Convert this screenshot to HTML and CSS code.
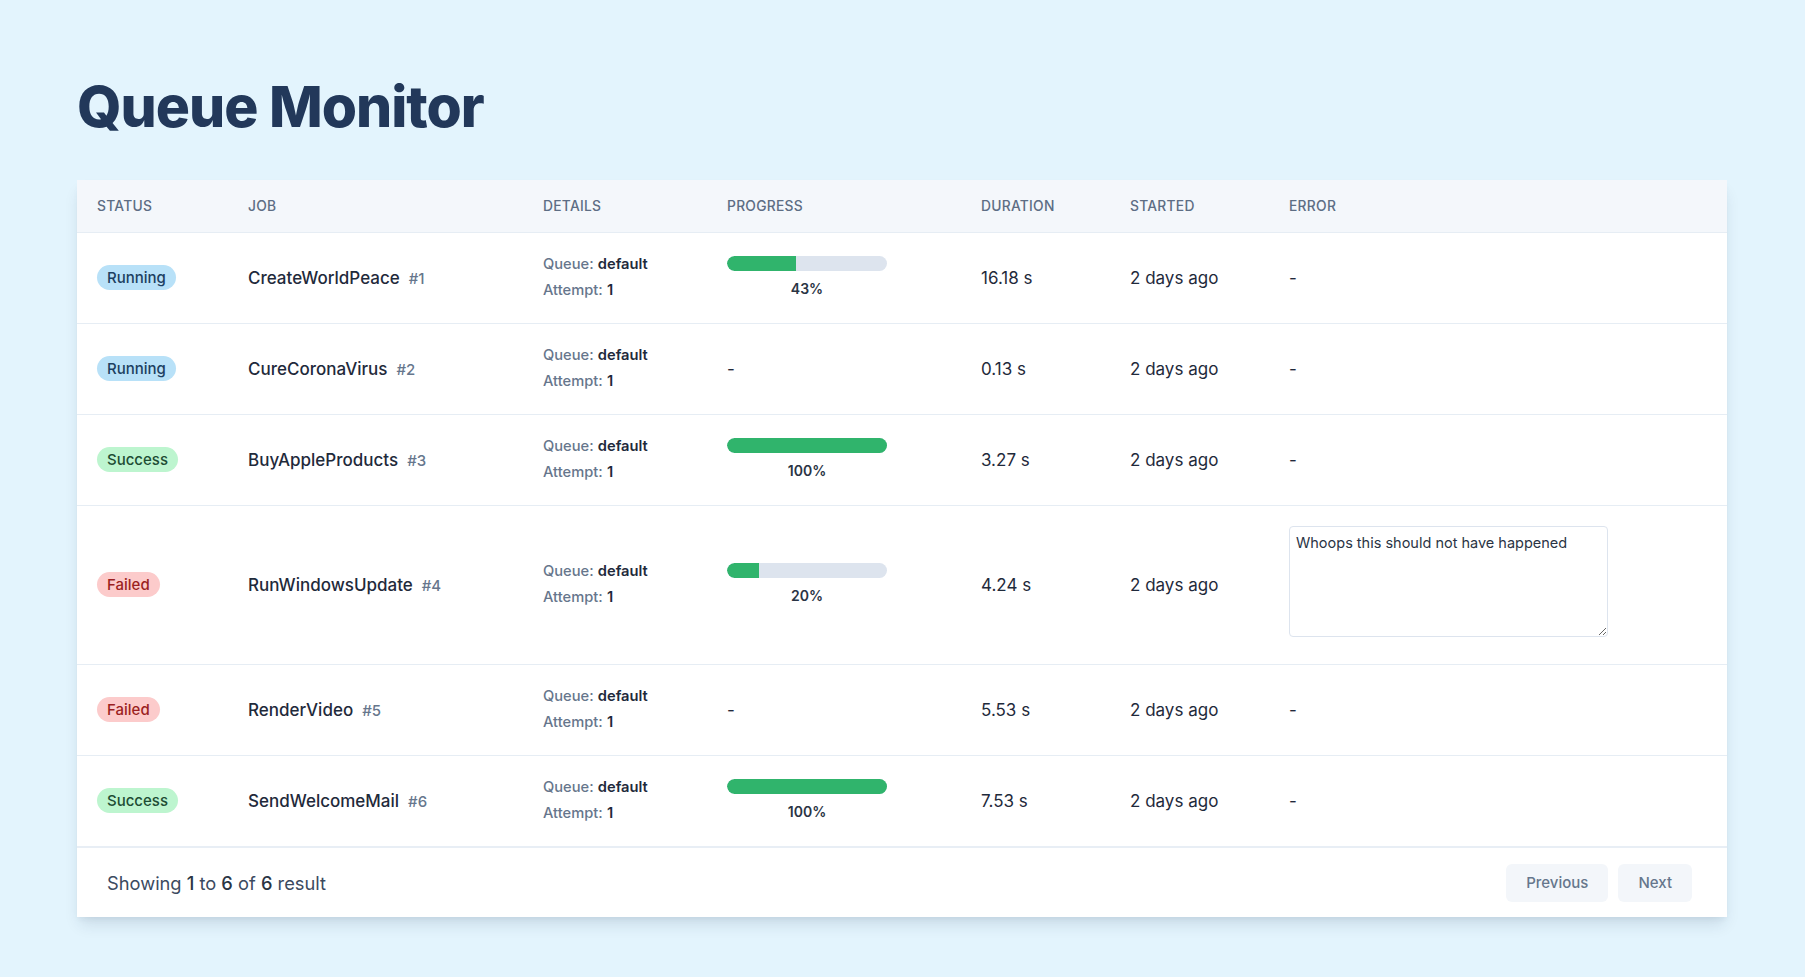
FILE: index.html
```html
<!DOCTYPE html>
<html lang="en">
<head>
<meta charset="utf-8">
<title>Queue Monitor</title>
<link rel="stylesheet" href="styles.css">
</head>
<body>
<div class="page">
  <h1 class="title">Queue Monitor</h1>
  <div class="card">
    <table class="jobs">
      <colgroup>
        <col class="c-status"><col class="c-job"><col class="c-details"><col class="c-progress"><col class="c-duration"><col class="c-started"><col class="c-error">
      </colgroup>
      <thead>
        <tr>
          <th>Status</th><th>Job</th><th>Details</th><th>Progress</th><th>Duration</th><th>Started</th><th>Error</th>
        </tr>
      </thead>
      <tbody>
        <tr>
          <td><span class="badge running">Running</span></td>
          <td><span class="job-name">CreateWorldPeace</span><span class="job-id">#1</span></td>
          <td class="details"><div><span class="lbl">Queue:</span> <b>default</b></div><div><span class="lbl">Attempt:</span> <b>1</b></div></td>
          <td><div class="progress"><div class="bar"><div class="fill" style="width:43%"></div></div><div class="pct">43%</div></div></td>
          <td>16.18 s</td>
          <td>2 days ago</td>
          <td>-</td>
        </tr>
        <tr>
          <td><span class="badge running">Running</span></td>
          <td><span class="job-name">CureCoronaVirus</span><span class="job-id">#2</span></td>
          <td class="details"><div><span class="lbl">Queue:</span> <b>default</b></div><div><span class="lbl">Attempt:</span> <b>1</b></div></td>
          <td>-</td>
          <td>0.13 s</td>
          <td>2 days ago</td>
          <td>-</td>
        </tr>
        <tr>
          <td><span class="badge success">Success</span></td>
          <td><span class="job-name">BuyAppleProducts</span><span class="job-id">#3</span></td>
          <td class="details"><div><span class="lbl">Queue:</span> <b>default</b></div><div><span class="lbl">Attempt:</span> <b>1</b></div></td>
          <td><div class="progress"><div class="bar"><div class="fill" style="width:100%"></div></div><div class="pct">100%</div></div></td>
          <td>3.27 s</td>
          <td>2 days ago</td>
          <td>-</td>
        </tr>
        <tr>
          <td><span class="badge failed">Failed</span></td>
          <td><span class="job-name">RunWindowsUpdate</span><span class="job-id">#4</span></td>
          <td class="details"><div><span class="lbl">Queue:</span> <b>default</b></div><div><span class="lbl">Attempt:</span> <b>1</b></div></td>
          <td><div class="progress"><div class="bar"><div class="fill" style="width:20%"></div></div><div class="pct">20%</div></div></td>
          <td>4.24 s</td>
          <td>2 days ago</td>
          <td><textarea class="error-box" readonly>Whoops this should not have happened</textarea></td>
        </tr>
        <tr>
          <td><span class="badge failed">Failed</span></td>
          <td><span class="job-name">RenderVideo</span><span class="job-id">#5</span></td>
          <td class="details"><div><span class="lbl">Queue:</span> <b>default</b></div><div><span class="lbl">Attempt:</span> <b>1</b></div></td>
          <td>-</td>
          <td>5.53 s</td>
          <td>2 days ago</td>
          <td>-</td>
        </tr>
        <tr>
          <td><span class="badge success">Success</span></td>
          <td><span class="job-name">SendWelcomeMail</span><span class="job-id">#6</span></td>
          <td class="details"><div><span class="lbl">Queue:</span> <b>default</b></div><div><span class="lbl">Attempt:</span> <b>1</b></div></td>
          <td><div class="progress"><div class="bar"><div class="fill" style="width:100%"></div></div><div class="pct">100%</div></div></td>
          <td>7.53 s</td>
          <td>2 days ago</td>
          <td>-</td>
        </tr>
      </tbody>
    </table>
    <div class="footer">
      <p class="summary">Showing <strong>1</strong> to <strong>6</strong> of <strong>6</strong> result</p>
      <div class="pager">
        <button class="btn">Previous</button>
        <button class="btn">Next</button>
      </div>
    </div>
  </div>
</div>
</body>
</html>
```

FILE: styles.css
```css
* { box-sizing: border-box; }

html, body {
  margin: 0;
  padding: 0;
}

body {
  background: #e3f4fd;
  font-family: Inter, "Noto Sans", "Liberation Sans", sans-serif;
  color: #1e293b;
  min-height: 977px;
}

.page {
  padding: 77px 78px 60px 77px;
}

.title {
  margin: 0 0 43px 0;
  font-size: 57px;
  line-height: 60px;
  font-weight: 800;
  color: #22385a;
  letter-spacing: -1px;
}

.card {
  background: #ffffff;
  box-shadow: 0 10px 15px -3px rgba(15, 40, 70, 0.12), 0 4px 6px -2px rgba(15, 40, 70, 0.06);
}

.jobs {
  width: 100%;
  border-collapse: collapse;
  table-layout: fixed;
}

.c-status { width: 151px; }
.c-job { width: 295px; }
.c-details { width: 184px; }
.c-progress { width: 254px; }
.c-duration { width: 149px; }
.c-started { width: 159px; }
.c-error { width: auto; }

.jobs thead th {
  background: #f4f7fb;
  height: 52px;
  padding: 0 0 0 20px;
  text-align: left;
  font-size: 13.8px;
  font-weight: 500;
  letter-spacing: 0.02em;
  text-transform: uppercase;
  color: #5d6d84;
  border-bottom: 1px solid #e6edf4;
  vertical-align: middle;
}

.jobs tbody td {
  padding: 19px 0 19px 20px;
  border-bottom: 1px solid #e6edf4;
  vertical-align: middle;
  font-size: 17px;
  color: #1f2a3b;
  height: 91px;
}

.jobs tbody tr:last-child td {
  border-bottom: none;
}

.badge {
  display: inline-block;
  height: 25px;
  line-height: 25px;
  padding: 0 10px;
  border-radius: 999px;
  font-size: 15px;
  font-weight: 500;
}

.badge.running { background: #b8e1f8; color: #1c3f61; }
.badge.success { background: #bdf5cf; color: #1d4d34; }
.badge.failed { background: #fccbcb; color: #9b1f22; }

.job-name {
  font-size: 17px;
  font-weight: 450;
  color: #1f2a3b;
}

.job-id {
  margin-left: 9px;
  font-size: 15px;
  font-weight: 500;
  color: #66768c;
}

.jobs tbody td.details {
  font-size: 14.7px;
  line-height: 25.5px;
}

.details .lbl {
  color: #66768c;
  font-weight: 500;
}

.details b {
  font-weight: 600;
  color: #1f2a3b;
}

.progress {
  width: 160px;
}

.bar {
  height: 15px;
  border-radius: 999px;
  background: #dde4ee;
  overflow: hidden;
}

.fill {
  height: 100%;
  background: #30b46c;
  border-radius: 999px 0 0 999px;
}

.pct {
  margin-top: 8px;
  text-align: center;
  font-size: 14px;
  line-height: 20px;
  font-weight: 600;
  color: #2a3444;
}

.error-box {
  display: block;
  width: 319px;
  height: 111px;
  margin: 1px 0 8px 0;
  padding: 6px;
  border: 1px solid #dde4ee;
  border-radius: 4px;
  font-family: Inter, "Noto Sans", "Liberation Sans", sans-serif;
  font-size: 14.5px;
  line-height: 20px;
  color: #2a3444;
  background: #ffffff;
  resize: vertical;
}

.footer {
  display: flex;
  align-items: center;
  justify-content: space-between;
  height: 71px;
  padding: 0 35px 0 30px;
  border-top: 2px solid #e8eef5;
}

.summary {
  margin: 0;
  font-size: 18.3px;
  color: #3b4a5f;
}

.summary strong {
  font-weight: 500;
  color: #2a3444;
}

.pager {
  display: flex;
  gap: 10px;
}

.btn {
  height: 38px;
  padding: 0 20px;
  border: none;
  border-radius: 6px;
  background: #f3f6fa;
  font-family: Inter, "Noto Sans", "Liberation Sans", sans-serif;
  font-size: 15px;
  font-weight: 500;
  color: #66768c;
}
```
